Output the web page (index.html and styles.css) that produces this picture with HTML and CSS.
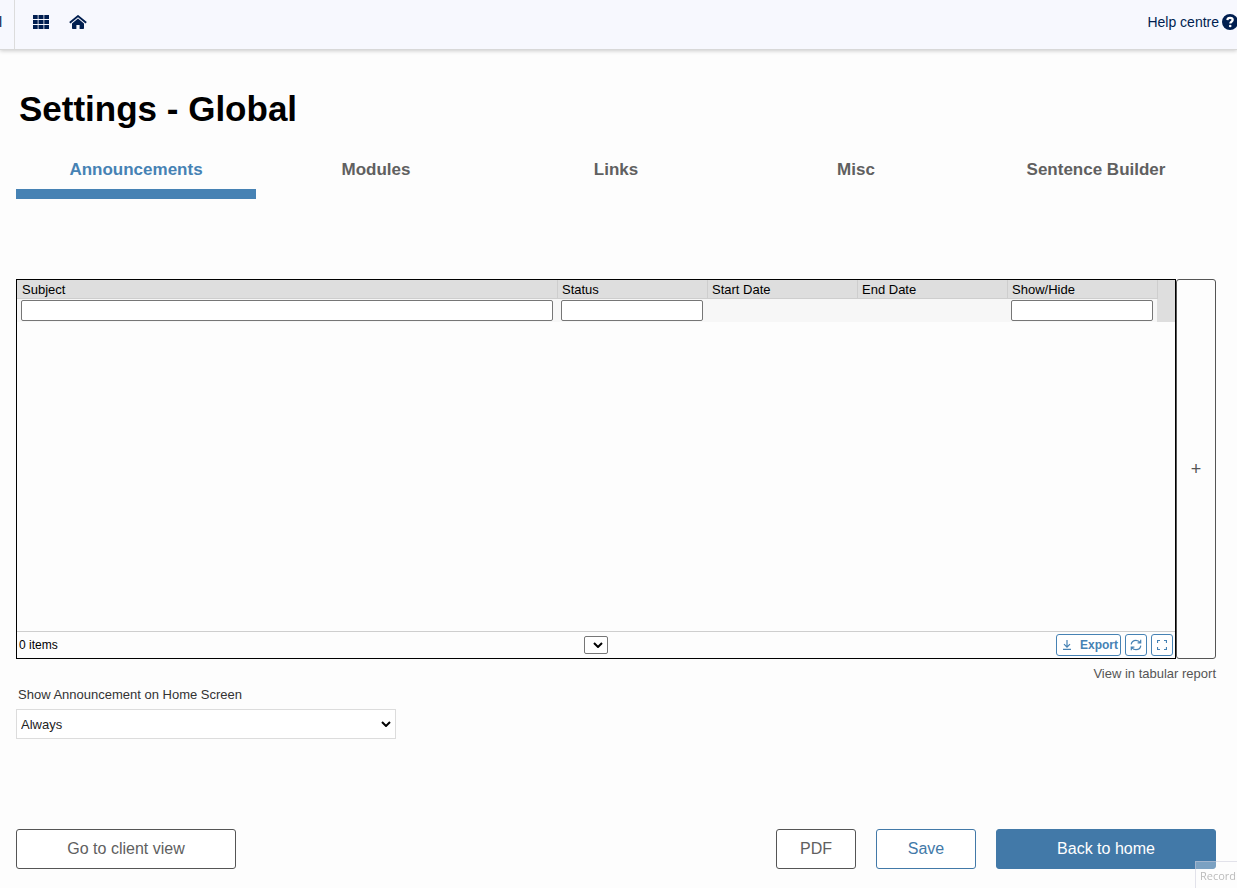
FILE: index.html
```html
<!DOCTYPE html>
<html lang="en">
<head>
    <meta charset="UTF-8">
    <meta name="viewport" content="width=device-width, initial-scale=1.0">
    <title>Settings - Global</title>
    <link rel="stylesheet" href="styles.css">
</head>
<body>
    <header class="topbar">
        <div class="topbar-brand">l</div>
        <nav class="topbar-nav">
            <a href="#" aria-label="Modules">
                <svg width="16" height="14" viewBox="0 0 16 14">
                    <path d="M0 0h4.700v4H0zM5.500 0h5v4h-5zM11.300 0H16v4h-4.700zM0 5h4.700v4H0zM5.500 5h5v4h-5zM11.300 5H16v4h-4.700zM0 10h4.700v4H0zM5.500 10h5v4h-5zM11.300 10H16v4h-4.700z"/>
                </svg>
            </a>
            <a href="#" aria-label="Home">
                <svg width="18" height="14" viewBox="0 0 18 14">
                    <path d="M9 3.6L3 8.6V13.2q0 .8.8.8H7.4V10h3.2v4h3.6q.8 0 .8-.8V8.6z"/>
                    <path d="M.8 7.8L9 1.1l8.2 6.7" fill="none" stroke="#001e50" stroke-width="1.9"/>
                </svg>
            </a>
        </nav>
        <a href="#" class="help-link">Help centre
            <svg width="16" height="16" viewBox="0 0 16 16">
                <circle cx="8" cy="8" r="8"/>
                <path d="M5.4 6.1C5.5 4.5 6.6 3.8 8 3.8c1.5 0 2.7.8 2.7 2.2 0 1.7-2.4 1.800-2.400 3.400" fill="none" stroke="#fff" stroke-width="2.2"/>
                <circle cx="8.2" cy="12" r="1.3" fill="#fff"/>
            </svg>
        </a>
    </header>

    <main class="page">
        <h1>Settings - Global</h1>

        <nav class="tabs">
            <a href="#" class="tab active">Announcements</a>
            <a href="#" class="tab">Modules</a>
            <a href="#" class="tab">Links</a>
            <a href="#" class="tab">Misc</a>
            <a href="#" class="tab">Sentence Builder</a>
        </nav>

        <div class="grid-row">
            <div class="grid-box">
                <table class="grid">
                    <thead>
                        <tr class="grid-head">
                            <th>Subject</th>
                            <th class="col">Status</th>
                            <th class="col">Start Date</th>
                            <th class="col">End Date</th>
                            <th class="col">Show/Hide</th>
                            <th class="scroll"></th>
                        </tr>
                        <tr class="grid-filter">
                            <td><input type="text" aria-label="Filter subject"></td>
                            <td><input type="text" aria-label="Filter status"></td>
                            <td></td>
                            <td></td>
                            <td><input type="text" aria-label="Filter show/hide"></td>
                            <td class="scroll"></td>
                        </tr>
                    </thead>
                </table>
                <div class="grid-footer">
                    <span class="count">0 items</span>
                    <span class="select-wrap pager">
                        <select aria-label="Page"></select>
                        <svg class="chevron" width="10" height="6" viewBox="0 0 10 6"><path d="M1 1l4 4 4-4"/></svg>
                    </span>
                    <div class="grid-tools">
                        <button type="button" class="tool export">
                            <svg width="10" height="10" viewBox="0 0 10 10"><path d="M5 0v7M2 4.2l3 3 3-3M1 9.400h8"/></svg>
                            Export
                        </button>
                        <button type="button" class="tool" aria-label="Refresh">
                            <svg width="12" height="12" viewBox="0 0 12 12"><path d="M1.2 5.4C1.6 2.9 3.6 1.3 6 1.3c1.7 0 3.1.8 4.4 2.4M10.7 .8v3.1H7.6M10.8 6.6C10.4 9.1 8.4 10.7 6 10.7c-1.7 0-3.1-.8-4.4-2.4M1.3 11.2V8.1h3.1"/></svg>
                        </button>
                        <button type="button" class="tool" aria-label="Full screen">
                            <svg width="10" height="10" viewBox="0 0 10 10"><path d="M.5 3V.5H3M7 .5h2.500V3M9.500 7v2.500H7M3 9.500H.5V7"/></svg>
                        </button>
                    </div>
                </div>
            </div>
            <button type="button" class="add-btn" aria-label="Add">+</button>
        </div>
        <a href="#" class="tabular-link">View in tabular report</a>

        <div class="field">
            <label for="showAnnouncement">Show Announcement on Home Screen</label>
            <span class="select-wrap">
                <select id="showAnnouncement">
                    <option>Always</option>
                </select>
                <svg class="chevron" width="10" height="6" viewBox="0 0 10 6"><path d="M1 1l4 4 4-4"/></svg>
            </span>
        </div>

        <div class="actions">
            <button type="button" class="btn wide">Go to client view</button>
            <button type="button" class="btn pdf">PDF</button>
            <button type="button" class="btn save">Save</button>
            <button type="button" class="btn wide primary">Back to home</button>
        </div>
    </main>

    <div class="recorder">Record</div>
</body>
</html>
```
FILE: styles.css
```css
* {
    margin: 0;
    padding: 0;
    box-sizing: border-box;
}

body {
    background-color: #fdfdfd;
    font-family: "Liberation Sans", Arial, sans-serif;
    font-size: 13px;
    color: #000;
}

a {
    text-decoration: none;
}

.topbar {
    display: flex;
    align-items: center;
    height: 50px;
    background-color: #f7f8fe;
    border-bottom: 1px solid #d8d8d8;
    box-shadow: 0 1px 4px rgba(0, 0, 0, 0.2);
    color: #001e50;
    font-size: 14px;
    overflow-x: clip;
}

.topbar svg {
    display: block;
    fill: #001e50;
}

.topbar-brand {
    width: 15px;
    height: 100%;
    line-height: 44px;
    border-right: 1px solid #dcdcdc;
    text-indent: -1px;
}

.topbar-nav {
    display: flex;
    gap: 20px;
    padding: 0 0 6px 18px;
}

.help-link {
    display: flex;
    align-items: center;
    gap: 3px;
    margin-left: auto;
    padding-bottom: 6px;
    margin-right: -1px;
    color: #001e50;
}

.page {
    padding: 38px 21px 19px 16px;
}

h1 {
    padding-left: 3px;
    font-size: 35px;
    line-height: 42px;
}

.tabs {
    display: flex;
    margin-top: 20px;
}

.tab {
    flex: 1;
    height: 49px;
    line-height: 40px;
    border-bottom: 10px solid transparent;
    color: #606060;
    font-size: 17px;
    font-weight: bold;
    text-align: center;
}

.tab.active {
    border-color: #4682b4;
    color: #4682b4;
}

.grid-row {
    display: flex;
    height: 380px;
    margin-top: 80px;
}

.grid-box {
    display: flex;
    flex: 1;
    flex-direction: column;
    border: 1px solid #000;
}

.grid {
    width: 100%;
    border-collapse: separate;
    border-spacing: 0;
    table-layout: fixed;
}

.grid th {
    height: 19px;
    padding: 2px 0 0 5px;
    background-color: #dedede;
    border-bottom: 1px solid #cecece;
    font-weight: normal;
    line-height: 16px;
    text-align: left;
}

.grid th.col {
    width: 150px;
    padding-left: 4px;
    border-left: 1px solid #cecece;
}

.grid td {
    height: 23px;
    padding: 0 4px;
    background-color: #f7f7f7;
}

.grid .scroll {
    width: 18px;
    padding: 0;
    background-color: #dedede;
    border-bottom: none;
}

.grid th.scroll {
    border-left: 1px solid #cecece;
}

.grid input {
    display: block;
    width: 100%;
    height: 21px;
    background-color: #fff;
    border: 1px solid #767676;
    border-radius: 2px;
}

.grid-footer {
    display: grid;
    grid-template-columns: 1fr auto 1fr;
    align-items: center;
    height: 27px;
    margin-top: auto;
    padding: 0 2px;
    border-top: 1px solid #cecece;
    font-size: 12px;
}

.grid-tools {
    display: flex;
    gap: 4px;
    justify-content: flex-end;
}

.tool {
    display: flex;
    align-items: center;
    justify-content: center;
    width: 22px;
    height: 22px;
    background-color: #fff;
    border: 1px solid #4682b4;
    border-radius: 3px;
    color: #4682b4;
    font-family: inherit;
    font-size: 12px;
    font-weight: bold;
}

.tool.export {
    justify-content: flex-end;
    gap: 8px;
    width: 65px;
    padding-right: 2px;
}

.tool svg {
    fill: none;
    stroke: #4682b4;
    stroke-width: 1.2;
}

.select-wrap {
    display: block;
    position: relative;
}

.select-wrap select {
    display: block;
    width: 100%;
    height: 100%;
    appearance: none;
    background-color: #fff;
    border: 1px solid #dcdcdc;
    color: #222;
    font-family: inherit;
    font-size: 13px;
}

.chevron {
    position: absolute;
    top: 50%;
    right: 5px;
    margin-top: -3px;
    fill: none;
    stroke: #000;
    stroke-width: 2;
    pointer-events: none;
}

.pager {
    width: 24px;
    height: 18px;
}

.pager select {
    border-color: #767676;
    border-radius: 2px;
}

.add-btn {
    width: 40px;
    background-color: #fdfdfd;
    border: 1px solid #555;
    border-radius: 3px;
    color: #555;
    font-family: inherit;
    font-size: 18px;
}

.tabular-link {
    display: block;
    margin-top: 5px;
    color: #555;
    line-height: 20px;
    text-align: right;
}

.field {
    width: 380px;
    color: #333;
}

.field label {
    display: block;
    padding: 1px 0 4px 2px;
    line-height: 20px;
}

.field .select-wrap {
    height: 30px;
}

.field select {
    padding-left: 4px;
}

.actions {
    display: flex;
    gap: 20px;
    margin-top: 90px;
}

.btn {
    height: 40px;
    background-color: #fff;
    border: 1px solid #555;
    border-radius: 3px;
    color: #606060;
    font-family: inherit;
    font-size: 16px;
}

.btn.wide {
    width: 220px;
}

.btn.pdf {
    width: 80px;
    margin-left: auto;
}

.btn.save {
    width: 100px;
    border-color: #4279a8;
    color: #4279a8;
}

.btn.primary {
    background-color: #4279a8;
    border-color: #4279a8;
    color: #fff;
}

/* screen recorder label, sits over the page corner */
.recorder {
    position: fixed;
    right: 0;
    bottom: 0;
    width: 42px;
    height: 27px;
    padding-left: 4px;
    background-color: rgba(255, 255, 255, 0.3);
    border-top: 1px solid rgba(200, 200, 215, 0.5);
    border-left: 1px solid rgba(200, 200, 215, 0.5);
    color: #bbb;
    font-family: "Open Sans", sans-serif;
    font-size: 11px;
    line-height: 28px;
    white-space: nowrap;
}
```
